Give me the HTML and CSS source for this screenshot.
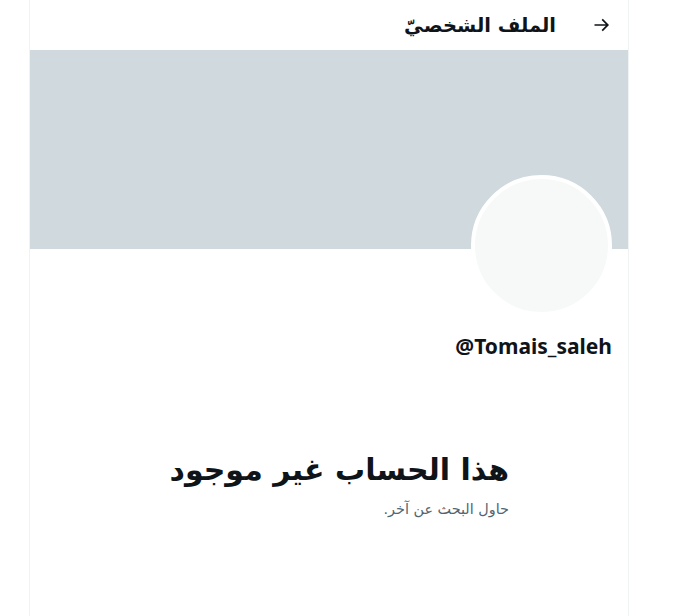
FILE: index.html
```html
<!DOCTYPE html>
<html lang="ar" dir="rtl">
<head>
<meta charset="utf-8">
<link rel="stylesheet" href="styles.css">
</head>
<body>
<main class="col">
  <header class="top">
    <span class="back">
      <svg viewBox="0 0 24 24" width="20" height="20"><path d="M16.586 13l-5.043 5.04 1.414 1.42L20.414 12l-7.457-7.46-1.414 1.42L16.586 11H3v2h13.586z"/></svg>
    </span>
    <h2 class="title">الملف الشخصيّ</h2>
  </header>
  <div class="banner"></div>
  <section class="info">
    <div class="avatar-row"><div class="avatar"></div></div>
    <div class="handle" dir="ltr">@Tomais_saleh</div>
  </section>
  <section class="empty">
    <h1 class="empty-title">هذا الحساب غير موجود</h1>
    <p class="empty-sub">حاول البحث عن آخر.</p>
  </section>
</main>
</body>
</html>
```
FILE: styles.css
```css
html, body { margin: 0; padding: 0; background: #fff; }
body { font-family: "DejaVu Sans", "Noto Sans", sans-serif; color: #0f1419; }
.col {
  margin: 0 auto 0 29px;
  width: 598px;
  min-height: 616px;
  border-left: 1px solid #eff3f4;
  border-right: 1px solid #eff3f4;
}
.top {
  height: 50px;
  display: flex;
  align-items: center;
  padding-right: 16px;
}
.back { width: 20px; height: 20px; display: flex; margin-left: 36px; }
.back svg { fill: #0f1419; }
.title { margin: 0; font-size: 19.5px; font-weight: 700; }
.banner { height: 199px; background: #cfd9de; }
.info { padding: 0 16px; }
.avatar-row { display: flex; margin-top: -74px; }
.avatar {
  width: 133px; height: 133px;
  border-radius: 50%;
  background: #f7f9f9;
  border: 4px solid #fff;
}
.handle {
  text-align: right;
  font-family: "Noto Sans", sans-serif;
  font-weight: 700;
  font-size: 21px;
  line-height: 26px;
  margin-top: 17px;
}
.empty { max-width: 360px; margin: 93px auto 0; padding: 0 20px; }
.empty-title { margin: 0; font-size: 30px; font-weight: 700; line-height: 36px; }
.empty-sub { margin: 13px 0 0; font-size: 14.4px; color: #536471; }
```
